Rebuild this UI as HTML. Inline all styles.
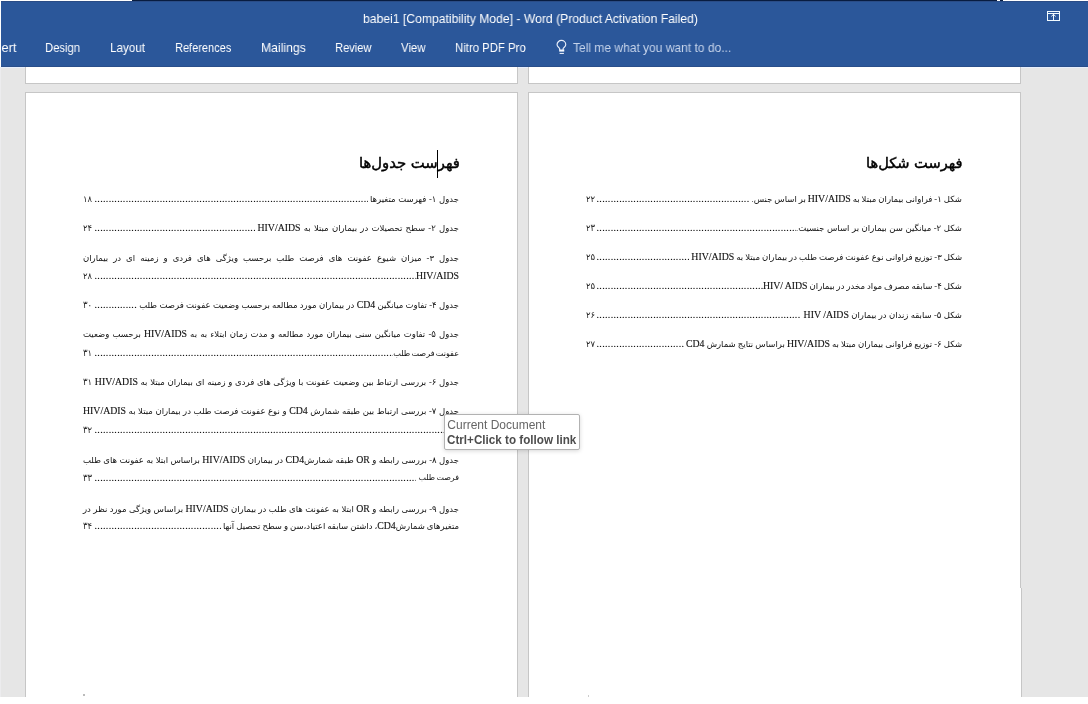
<!DOCTYPE html>
<html lang="fa">
<head>
<meta charset="utf-8">
<title>babei1 [Compatibility Mode] - Word</title>
<style>
html,body{margin:0;padding:0;}
body{width:1088px;height:704px;position:relative;overflow:hidden;background:#fff;font-family:"Liberation Sans","DejaVu Sans",sans-serif;}
.abs{position:absolute;}
#topstrip{left:132px;top:0;width:865px;height:1px;background:#081c40;}
#topstrip2{left:1000px;top:0;width:3px;height:1px;background:#081c40;}
#toprow{left:1px;top:1px;width:1087px;height:1px;background:#2a4c86;}
#bar{left:1px;top:1px;width:1087px;height:66px;background:#2b579a;}
#ws{left:1px;top:67px;width:1087px;height:630px;background:#e6e6e6;border-top:1px solid #e6eefc;box-sizing:border-box;}
.page{position:absolute;background:#fff;border:1px solid #c6c6c6;box-sizing:border-box;}
#title{will-change:transform;left:363.2px;top:9px;height:20px;line-height:20px;color:#fff;font-size:13px;white-space:nowrap;transform-origin:0 0;}
.menu{will-change:transform;position:absolute;top:38px;height:20px;line-height:20px;color:#fff;font-size:13px;white-space:nowrap;transform-origin:0 0;}
.tell{color:#c5d3ea;}
/* document text */
.h{position:absolute;direction:rtl;font-family:"DejaVu Sans",sans-serif;font-weight:normal;-webkit-text-stroke:0.45px #000;color:#000;white-space:nowrap;font-size:14.6px;height:24px;line-height:24px;transform-origin:0 6px;will-change:transform;}
.ln{position:absolute;direction:rtl;height:18px;line-height:18px;font-size:8.5px;white-space:nowrap;color:#111;font-family:"Liberation Serif","DejaVu Sans",serif;will-change:transform;}
.ln.j{text-align:justify;text-align-last:justify;white-space:normal;word-spacing:-0.5px;}
.ln.l{display:flex;}
.ln.l .t{flex:none;text-align:justify;text-align-last:justify;white-space:nowrap;}
.ln.l .d{position:relative;top:0px;flex:1 1 0;overflow:hidden;direction:ltr;text-align:left;min-width:0;font-family:"Liberation Serif",serif;font-size:10px;letter-spacing:0.3333px;text-indent:-0.5px;color:#000;-webkit-text-stroke:0.1px #000;text-shadow:none;}
.ln .n{flex:none;display:inline-block;transform:scaleY(1.05);transform-origin:0 11.87px;color:#222;letter-spacing:0.5px;}
.ln.l .n{text-align:left;}
.en{display:inline-block;direction:ltr;font-family:"Liberation Serif",serif;font-size:9.8px;line-height:1;-webkit-text-stroke:0.12px #111;}
#tip{left:444px;top:414px;width:136px;height:36px;box-sizing:border-box;background:#fff;border:1px solid #b2b2b2;border-radius:2px;box-shadow:0 1px 4px rgba(0,0,0,.16);font-size:12px;color:#666;white-space:nowrap;}
#tip div{position:absolute;left:2.3px;height:14px;line-height:14px;transform-origin:0 0;}
</style>
</head>
<body>
<div class="abs" id="bar"></div>
<div class="abs" id="topstrip"></div>
<div class="abs" id="topstrip2"></div>
<div class="abs" id="toprow"></div>
<div class="abs" id="ws"></div>

<div class="abs" id="title" style="transform:scaleX(0.9353)">babei1 [Compatibility Mode] - Word (Product Activation Failed)</div>
<div class="menu" style="left:-4.7px;transform:scaleX(0.9888)">sert</div>
<div class="menu" style="left:44.90px;transform:scaleX(0.8648)">Design</div>
<div class="menu" style="left:110.15px;transform:scaleX(0.8963)">Layout</div>
<div class="menu" style="left:175.15px;transform:scaleX(0.8461)">References</div>
<div class="menu" style="left:260.65px;transform:scaleX(0.9384)">Mailings</div>
<div class="menu" style="left:334.90px;transform:scaleX(0.8562)">Review</div>
<div class="menu" style="left:400.65px;transform:scaleX(0.8766)">View</div>
<div class="menu" style="left:454.90px;transform:scaleX(0.8745)">Nitro PDF Pro</div>
<div class="menu tell" style="left:573.15px;transform:scaleX(0.9240)">Tell me what you want to do...</div>
<svg class="abs" style="left:553px;top:37px" width="18" height="20" viewBox="553 37 18 20"><path d="M559.7 50v-1.2c0-1.1-2.65-1.7-2.65-4a4.35 4.35 0 0 1 8.7 0c0 2.3-2.65 2.9-2.65 4v1.2" fill="none" stroke="#e8eefa" stroke-width="1.15"/><rect x="559.15" y="49.5" width="5.1" height="2.1" fill="#f4f8ff"/><rect x="559.6" y="52.9" width="4.3" height="1" fill="#f4f8ff"/></svg>
<svg class="abs" style="left:1044px;top:8px" width="20" height="16" viewBox="1044 8 20 16"><rect x="1047.5" y="11.5" width="12" height="9" fill="none" stroke="#f2fbff" stroke-width="1"/><rect x="1048" y="13" width="11" height="1" fill="#f2fbff"/><rect x="1053" y="14" width="1" height="6" fill="#f2fbff"/><path d="M1051.3 16.4l2.2-2 2.2 2" fill="none" stroke="#f2fbff" stroke-width="1"/></svg>

<!-- pages -->
<div class="page" style="left:25px;top:60px;width:493px;height:24px;border-top:none"></div>
<div class="page" style="left:528px;top:60px;width:493px;height:24px;border-top:none"></div>
<div class="page" style="left:25px;top:92px;width:493px;height:612px;"></div>
<div class="page" style="left:528px;top:92px;width:493px;height:500px;border-bottom:none"></div>
<div class="page" style="left:528px;top:588px;width:494px;height:116px;border-top:none"></div>
<div class="abs" style="left:0;top:697px;width:1088px;height:7px;background:#fff"></div>
<div class="abs" id="bar2" style="left:1px;top:60px;width:1087px;height:7px;background:#2b579a;border-bottom:1px solid #294e8a;box-sizing:border-box"></div>

<!-- left page -->
<div class="h" style="right:628.6px;top:151px;font-size:14.8px">فهرست جدول‌ها</div>

<div class="ln l" style="left:83px;width:376px;top:190px"><span class="t" style="width:89.0px;margin-left:2.5px">جدول ۱- فهرست متغیرها</span><span class="d">......................................................................................................................................................</span><span class="n" style="width:12px">۱۸</span></div>
<div class="ln l" style="left:83px;width:376px;top:219px"><span class="t" style="width:201.5px;margin-left:2.5px">جدول ۲- سطح تحصیلات در بیماران مبتلا به <span class="en">HIV/AIDS</span></span><span class="d">......................................................................................................................................................</span><span class="n" style="width:12px">۲۴</span></div>
<div class="ln j" style="left:83px;width:376px;top:249px">جدول ۳-  میزان شیوع عفونت های فرصت طلب برحسب ویژگی های فردی و زمینه ای در بیماران</div>
<div class="ln l" style="left:83px;width:376px;top:267px"><span class="t" style="margin-left:0px"><span class="en">HIV/AIDS</span></span><span class="d">......................................................................................................................................................</span><span class="n" style="width:12px">۲۸</span></div>
<div class="ln l" style="left:83px;width:376px;top:296px"><span class="t" style="width:319.8px;margin-left:2.5px">جدول ۴- تفاوت میانگین <span class="en">CD4</span> در بیماران مورد مطالعه برحسب وضعیت عفونت فرصت طلب</span><span class="d">......................................................................................................................................................</span><span class="n" style="width:12px">۳۰</span></div>
<div class="ln j" style="left:83px;width:376px;top:325px">جدول ۵- تفاوت میانگین سنی بیماران مورد مطالعه و مدت زمان ابتلاء به به <span class="en">HIV/AIDS</span> برحسب وضعیت</div>
<div class="ln l" style="left:83px;width:376px;top:344px"><span class="t" style="margin-left:0px"><span style="word-spacing:-0.9px;font-size:8.1px">عفونت فرصت طلب</span></span><span class="d">......................................................................................................................................................</span><span class="n" style="width:12px">۳۱</span></div>
<div class="ln j" style="left:83px;width:376px;top:373px">جدول ۶- بررسی ارتباط بین وضعیت عفونت با ویژگی های فردی و زمینه ای بیماران مبتلا به <span class="en">HIV/ADIS</span> <span class="n">۳۱</span></div>
<div class="ln j" style="left:83px;width:376px;top:402px">جدول ۷- بررسی ارتباط بین طبقه شمارش <span class="en">CD4</span> و نوع عفونت فرصت طلب در بیماران مبتلا به <span class="en">HIV/ADIS</span></div>
<div class="ln l" style="left:83px;width:376px;top:421px"><span class="d">......................................................................................................................................................</span><span class="n" style="width:12px">۳۲</span></div>
<div class="ln j" style="left:83px;width:376px;top:451px">جدول ۸- بررسی رابطه و <span class="en">OR</span> طبقه شمارش<span class="en">CD4</span> در بیماران <span class="en">HIV/AIDS</span> براساس ابتلا به عفونت های طلب</div>
<div class="ln l" style="left:83px;width:376px;top:469px"><span class="t" style="width:40.6px;margin-left:2.5px;word-spacing:-0.6px;font-size:7.9px">فرصت طلب</span><span class="d">......................................................................................................................................................</span><span class="n" style="width:12px">۳۳</span></div>
<div class="ln j" style="left:83px;width:376px;top:500px">جدول ۹- بررسی رابطه و <span class="en">OR</span> ابتلا به عفونت های طلب در بیماران <span class="en">HIV/AIDS</span> براساس ویژگی مورد نظر در</div>
<div class="ln l" style="left:83px;width:376px;top:517px"><span class="t" style="width:236.0px;margin-left:2.5px;word-spacing:-0.2px">متغیرهای شمارش<span class="en">CD4</span>، داشتن سابقه اعتیاد،سن و سطح تحصیل آنها</span><span class="d">......................................................................................................................................................</span><span class="n" style="width:12px">۳۴</span></div>

<div class="abs" style="left:437px;top:150px;width:1px;height:28px;background:#000"></div>
<div class="abs" style="left:83px;top:694px;width:2px;height:2px;background:#bbb"></div>
<div class="abs" style="left:588px;top:695px;width:1px;height:2px;background:#ccc"></div>
<!-- right page -->
<div class="h" style="right:126px;top:151px">فهرست شکل‌ها</div>
<div class="ln l" style="left:586px;width:376px;top:190px"><span class="t" style="width:210.4px;margin-left:1.5px;word-spacing:-0.25px">شکل ۱- فراوانی بیماران مبتلا به <span class="en">HIV/AIDS</span> بر اساس جنس.</span><span class="d">......................................................................................................................................................</span><span class="n" style="width:11px">۲۲</span></div>
<div class="ln l" style="left:586px;width:376px;top:219px"><span class="t" style="width:166.0px;margin-left:0px">شکل ۲- میانگین سن بیماران بر اساس جنسیت.</span><span class="d">......................................................................................................................................................</span><span class="n" style="width:11px">۲۳</span></div>
<div class="ln l" style="left:586px;width:376px;top:248px"><span class="t" style="width:270.7px;margin-left:2.5px;word-spacing:-0.2px">شکل ۳- توزیع فراوانی نوع عفونت فرصت طلب در بیماران مبتلا به <span class="en">HIV/AIDS</span></span><span class="d">......................................................................................................................................................</span><span class="n" style="width:11px">۲۵</span></div>
<div class="ln l" style="left:586px;width:376px;top:277px"><span class="t" style="width:199.1px;margin-left:0px;word-spacing:-0.25px">شکل ۴- سابقه مصرف مواد مخدر در بیماران <span class="en">HIV/ AIDS</span></span><span class="d">......................................................................................................................................................</span><span class="n" style="width:11px">۲۵</span></div>
<div class="ln l" style="left:586px;width:376px;top:306px"><span class="t" style="width:158.4px;margin-left:2.5px">شکل ۵- سابقه زندان در بیماران <span class="en">HIV /AIDS</span></span><span class="d">......................................................................................................................................................</span><span class="n" style="width:11px">۲۶</span></div>
<div class="ln l" style="left:586px;width:376px;top:335px"><span class="t" style="width:276.0px;margin-left:2.5px;word-spacing:-0.1px">شکل ۶- توزیع فراوانی بیماران مبتلا به <span class="en">HIV/AIDS</span> براساس نتایج شمارش <span class="en">CD4</span></span><span class="d">......................................................................................................................................................</span><span class="n" style="width:11px">۲۷</span></div>

<div class="abs" style="left:0;top:0;width:1px;height:67px;background:#fff"></div>
<div class="abs" style="left:0;top:67px;width:1px;height:630px;background:#ececee"></div>
<div class="abs" id="tip"><div style="top:3px">Current Document</div><div style="top:18px;font-weight:bold;color:#4d4d4d;transform:scaleX(0.972)">Ctrl+Click to follow link</div></div>
</body>
</html>
